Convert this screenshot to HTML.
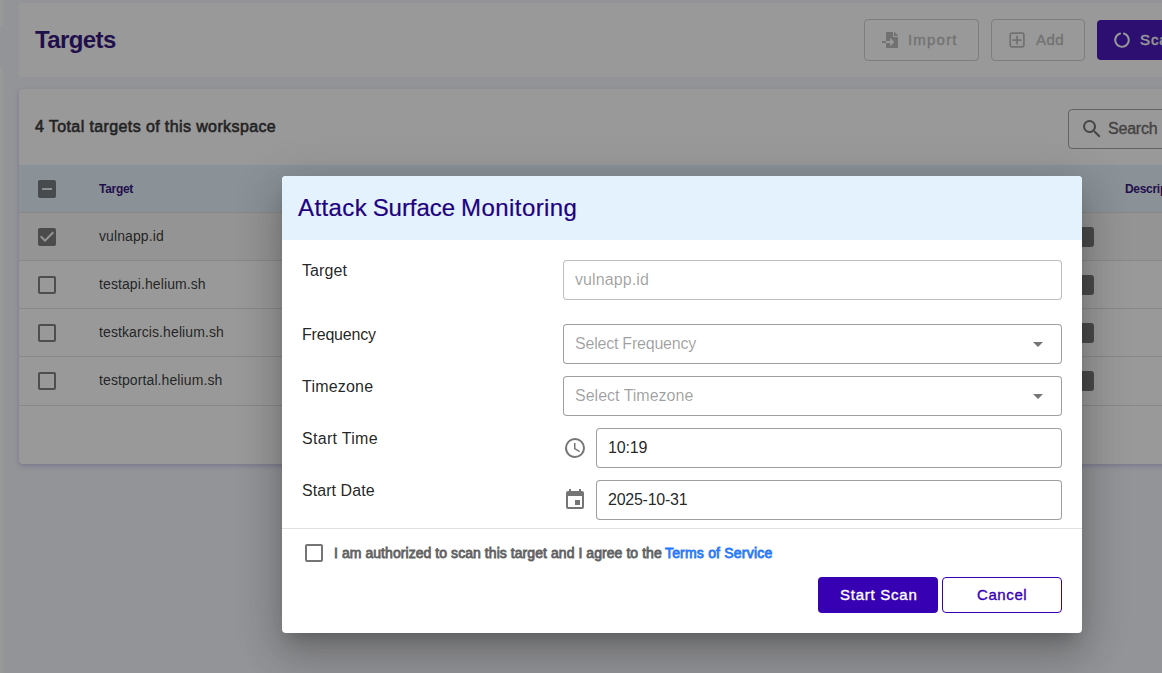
<!DOCTYPE html>
<html lang="en">
<head>
<meta charset="utf-8">
<title>Targets</title>
<style>
*{box-sizing:border-box;margin:0;padding:0}
html,body{width:1162px;height:673px;overflow:hidden}
body{position:relative;background:#f4f5fb;font-family:"Liberation Sans",Arial,sans-serif;color:rgba(0,0,0,.87);font-size:14px}
.abs{position:absolute}
.t{position:absolute;white-space:nowrap;line-height:1}
.strip{position:absolute;left:0;width:3px;background:#fff}
.card{position:absolute;left:19px;width:1300px;background:#fff;border-radius:4px;box-shadow:0 1px 2px rgba(90,80,220,.08)}
.btn-o{position:absolute;top:19px;height:42px;border:1px solid rgba(0,0,0,.2);border-radius:4px}
.med{font-weight:normal;-webkit-text-stroke:.55px currentColor}
.btn-o .t{color:#b8b8b8;font-size:15px;letter-spacing:1.2px;-webkit-text-stroke-width:.35px}
.btn-p{position:absolute;left:1097px;top:20px;width:140px;height:40px;background:#3700b3;border-radius:4px}
.thead{position:absolute;left:19px;top:165px;width:1300px;height:47px;background:#e3f2fd}
.rowline{position:absolute;left:19px;width:1300px;height:1px;background:rgba(0,0,0,.12)}
.cell{position:absolute;left:99px;letter-spacing:.1px;font-size:14px;line-height:1;white-space:nowrap;color:rgba(0,0,0,.87)}
.chip{position:absolute;left:1060px;width:34px;height:20px;border-radius:3px;background:#6e6e6e}
.overlay{position:absolute;left:0;top:0;width:1162px;height:673px;background:rgba(33,33,33,.46)}
.dialog{position:absolute;left:282px;top:176px;width:800px;height:457px;background:#fff;border-radius:4px;overflow:hidden;
 box-shadow:0 11px 15px -7px rgba(0,0,0,.2),0 24px 38px 3px rgba(0,0,0,.14),0 9px 46px 8px rgba(0,0,0,.12)}
.dtitle{position:absolute;left:0;top:0;width:800px;height:64px;background:#e3f2fd}
.lbl{position:absolute;left:20px;font-size:16px;line-height:1;white-space:nowrap;color:rgba(0,0,0,.87)}
.inp{position:absolute;height:40px;border:1px solid rgba(0,0,0,.38);border-radius:4px;background:#fff}
.inp .t{left:11px;top:11px;font-size:16px;color:rgba(0,0,0,.87)}
.inp.ph .t{color:rgba(0,0,0,.38)}
.inp.dis{border-color:rgba(0,0,0,.26)}
.caret{position:absolute;right:18px;top:17px;width:0;height:0;border-left:5px solid transparent;border-right:5px solid transparent;border-top:5px solid rgba(0,0,0,.54)}
.dbtn{position:absolute;top:401px;width:120px;height:36px;border-radius:4px}
.dbtn .t{font-size:15px;letter-spacing:.75px;-webkit-text-stroke-width:.35px}
</style>
</head>
<body>
<!-- background page -->
<div class="strip" style="top:0;height:27px"></div>
<div class="strip" style="top:67px;height:606px"></div>

<div class="card" style="top:3px;height:74px;border-radius:2px;box-shadow:none"></div>
<div class="t" id="h1" style="left:35px;top:28px;font-size:24px;font-weight:bold;letter-spacing:-.6px;color:#1f0070">Targets</div>

<div class="btn-o" style="left:864px;width:115px">
  <svg class="abs" style="left:17.4px;top:12px" width="16" height="16" viewBox="0 0 512 512"><path fill="#b5b5b5" d="M16 288c-8.800 0-16 7.200-16 16v32c0 8.800 7.200 16 16 16h112v-64zm489-183L407.100 7c-4.500-4.500-10.600-7-17-7H384v128h128v-6.100c0-6.300-2.500-12.400-7-16.900zm-153 31V0H152c-13.300 0-24 10.700-24 24v264h128v-65.200c0-14.300 17.300-21.400 27.400-11.300L379 308c6.600 6.700 6.600 17.400 0 24l-95.700 96.400c-10.100 10.100-27.400 3-27.400-11.300V352H128v136c0 13.300 10.700 24 24 24h336c13.300 0 24-10.700 24-24V160H376c-13.200 0-24-10.800-24-24z"/></svg>
  <div class="t med" id="bimp" style="left:43px;top:12px;letter-spacing:1.2px">Import</div>
</div>
<div class="btn-o" style="left:991px;width:94px">
  <svg class="abs" style="left:17.1px;top:12.25px" width="16" height="16" viewBox="0 0 16 16"><rect x="1.2" y="1.15" width="13.7" height="13.7" rx="1.6" fill="none" stroke="#b5b5b5" stroke-width="1.7"/><path d="M8.05 3.8v8.8M3.5 8.15h9.1" stroke="#b5b5b5" stroke-width="1.7" fill="none"/></svg>
  <div class="t med" id="badd" style="left:44px;top:12px;letter-spacing:.4px">Add</div>
</div>
<div class="btn-p">
  <svg class="abs" style="left:17px;top:12px" width="16" height="16" viewBox="0 0 512 512"><path fill="#fff" d="M288 39.056v16.659c0 10.804 7.281 20.159 17.686 23.066C383.204 100.434 440 171.518 440 256c0 101.689-82.295 184-184 184-101.689 0-184-82.295-184-184 0-84.470 56.786-155.564 134.312-177.219C216.719 75.874 224 66.517 224 55.712V39.064c0-15.709-14.834-27.153-30.046-23.234C86.603 43.482 7.394 141.206 8.003 257.332c.720 137.052 111.477 246.956 248.531 246.667C393.255 503.711 504 392.788 504 256c0-115.633-79.140-212.779-186.211-240.236C302.678 11.889 288 23.456 288 39.056z"/></svg>
  <div class="t med" id="bscan" style="left:43px;top:12px;color:#fff;font-size:15px;letter-spacing:.9px;-webkit-text-stroke-width:.4px">Scan</div>
</div>

<div class="card" style="top:89px;height:375px;box-shadow:0 2px 5px rgba(100,90,210,.33)"></div>
<div class="t med" id="tot" style="left:35px;top:119px;font-size:16px;letter-spacing:.39px;color:#262626;-webkit-text-stroke-width:.6px">4 Total targets of this workspace</div>
<div class="abs" style="left:1068px;top:109px;width:200px;height:40px;border:1px solid rgba(0,0,0,.38);border-radius:4px">
  <svg class="abs" style="left:11px;top:7px" width="24" height="24" viewBox="0 0 24 24"><path fill="rgba(0,0,0,.6)" d="M9.5,3A6.5,6.5 0 0,1 16,9.5C16,11.11 15.41,12.59 14.44,13.73L14.71,14H15.5L20.500,19L19,20.500L14,15.5V14.710L13.730,14.440C12.590,15.410 11.110,16 9.500,16A6.500,6.500 0 0,1 3,9.500A6.500,6.500 0 0,1 9.500,3M9.500,5C7,5 5,7 5,9.500C5,12 7,14 9.500,14C12,14 14,12 14,9.500C14,7 12,5 9.500,5Z"/></svg>
  <div class="t" id="srch" style="left:39px;top:11px;font-size:16px;letter-spacing:-.2px;color:#606060;-webkit-text-stroke:.35px #606060">Search</div>
</div>

<div class="thead"></div>
<div class="t" id="thT" style="left:99px;top:183px;font-size:12px;font-weight:bold;letter-spacing:-.3px;color:#1f0070">Target</div>
<div class="t" id="thD" style="left:1125px;top:183px;font-size:12px;font-weight:bold;letter-spacing:-.3px;color:#1f0070">Description</div>
<div class="rowline" style="top:212px"></div>
<div class="rowline" style="top:260px"></div>
<div class="rowline" style="top:308px"></div>
<div class="rowline" style="top:356px"></div>
<div class="rowline" style="top:405px"></div>
<div class="abs" style="left:19px;top:213px;width:1300px;height:47px;background:#f5f5f5"></div>

<!-- checkboxes -->
<svg class="abs" style="left:35px;top:177px" width="24" height="24" viewBox="0 0 24 24"><path fill="rgba(0,0,0,.54)" d="M17,13H7V11H17M19,3H5C3.89,3 3,3.89 3,5V19A2,2 0 0,0 5,21H19A2,2 0 0,0 21,19V5C21,3.89 20.1,3 19,3Z"/></svg>
<svg class="abs" style="left:35px;top:225px" width="24" height="24" viewBox="0 0 24 24"><path fill="rgba(0,0,0,.54)" d="M10,17L5,12L6.41,10.58L10,14.17L17.59,6.58L19,8M19,3H5C3.89,3 3,3.89 3,5V19A2,2 0 0,0 5,21H19A2,2 0 0,0 21,19V5C21,3.89 20.1,3 19,3Z"/></svg>
<svg class="abs" style="left:35px;top:273px" width="24" height="24" viewBox="0 0 24 24"><path fill="rgba(0,0,0,.54)" d="M19,3H5C3.89,3 3,3.89 3,5V19A2,2 0 0,0 5,21H19A2,2 0 0,0 21,19V5C21,3.89 20.1,3 19,3M19,5V19H5V5H19Z"/></svg>
<svg class="abs" style="left:35px;top:321px" width="24" height="24" viewBox="0 0 24 24"><path fill="rgba(0,0,0,.54)" d="M19,3H5C3.89,3 3,3.89 3,5V19A2,2 0 0,0 5,21H19A2,2 0 0,0 21,19V5C21,3.89 20.1,3 19,3M19,5V19H5V5H19Z"/></svg>
<svg class="abs" style="left:35px;top:369px" width="24" height="24" viewBox="0 0 24 24"><path fill="rgba(0,0,0,.54)" d="M19,3H5C3.89,3 3,3.89 3,5V19A2,2 0 0,0 5,21H19A2,2 0 0,0 21,19V5C21,3.89 20.1,3 19,3M19,5V19H5V5H19Z"/></svg>

<div class="cell" id="r1" style="top:229px">vulnapp.id</div>
<div class="cell" id="r2" style="top:277px">testapi.helium.sh</div>
<div class="cell" id="r3" style="top:325px">testkarcis.helium.sh</div>
<div class="cell" id="r4" style="top:373px">testportal.helium.sh</div>

<div class="chip" style="top:227px"></div>
<div class="chip" style="top:275px"></div>
<div class="chip" style="top:323px"></div>
<div class="chip" style="top:371px"></div>

<!-- scrim -->
<div class="overlay"></div>

<!-- dialog -->
<div class="dialog">
  <div class="dtitle"></div>
  <div class="t" id="dt" style="left:16px;top:20px;font-size:24px;letter-spacing:.18px;-webkit-text-stroke:.2px #21007f;color:#21007f"><span style="letter-spacing:.4px">Attack</span> <span style="letter-spacing:-.05px;margin-left:-1.3px">Surface</span> <span style="letter-spacing:.42px;margin-left:-.8px">Monitoring</span></div>

  <div class="lbl" id="l1" style="top:87px;letter-spacing:.1px">Target</div>
  <div class="lbl" id="l2" style="top:151px;letter-spacing:-.2px">Frequency</div>
  <div class="lbl" id="l3" style="top:203px;letter-spacing:.2px">Timezone</div>
  <div class="lbl" id="l4" style="top:255px;letter-spacing:.3px">Start Time</div>
  <div class="lbl" id="l5" style="top:307px;letter-spacing:.06px">Start Date</div>

  <div class="inp ph dis" style="left:281px;top:84px;width:499px"><div class="t" id="i1" style="letter-spacing:.1px">vulnapp.id</div></div>
  <div class="inp ph" style="left:281px;top:148px;width:499px"><div class="t" id="i2" style="letter-spacing:-.22px">Select Frequency</div><div class="caret"></div></div>
  <div class="inp ph" style="left:281px;top:200px;width:499px"><div class="t" id="i3" style="letter-spacing:0">Select Timezone</div><div class="caret"></div></div>

  <svg class="abs" style="left:281px;top:260px" width="24" height="24" viewBox="0 0 24 24"><path fill="rgba(0,0,0,.54)" d="M12,20A8,8 0 0,0 20,12A8,8 0 0,0 12,4A8,8 0 0,0 4,12A8,8 0 0,0 12,20M12,2A10,10 0 0,1 22,12A10,10 0 0,1 12,22C6.47,22 2,17.5 2,12A10,10 0 0,1 12,2M12.5,7V12.25L17,14.92L16.25,16.15L11,13V7H12.5Z"/></svg>
  <div class="inp" style="left:314px;top:252px;width:466px"><div class="t" id="i4" style="letter-spacing:-.14px">10:19</div></div>

  <svg class="abs" style="left:281px;top:312px" width="24" height="24" viewBox="0 0 24 24"><path fill="rgba(0,0,0,.54)" d="M19,19H5V8H19M16,1V3H8V1H6V3H5C3.89,3 3,3.89 3,5V19A2,2 0 0,0 5,21H19A2,2 0 0,0 21,19V5C21,3.89 20.1,3 19,3H18V1M17,12H12V17H17V12Z"/></svg>
  <div class="inp" style="left:314px;top:304px;width:466px"><div class="t" id="i5" style="letter-spacing:-.25px">2025-10-31</div></div>

  <div class="abs" style="left:0;top:352px;width:800px;height:1px;background:rgba(0,0,0,.12)"></div>

  <svg class="abs" style="left:20px;top:365px" width="24" height="24" viewBox="0 0 24 24"><path fill="rgba(0,0,0,.54)" d="M19,3H5C3.89,3 3,3.89 3,5V19A2,2 0 0,0 5,21H19A2,2 0 0,0 21,19V5C21,3.89 20.1,3 19,3M19,5V19H5V5H19Z"/></svg>
  <div class="t med" id="agree" style="left:52px;top:370px;font-size:14px;letter-spacing:.06px;color:#626262;-webkit-text-stroke-width:.8px">I am authorized to scan this target and I agree to the <span style="color:#2979ff;margin-left:-.8px;letter-spacing:.2px">Terms of Service</span></div>

  <div class="dbtn" style="left:536px;background:#3700b3"><div class="t med" id="bs" style="left:22px;top:10px;color:#fff">Start Scan</div></div>
  <div class="dbtn" style="left:660px;border:1px solid #3700b3"><div class="t med" id="bc" style="left:34px;top:9px;letter-spacing:.6px;color:#3700b3">Cancel</div></div>
</div>
</body>
</html>
